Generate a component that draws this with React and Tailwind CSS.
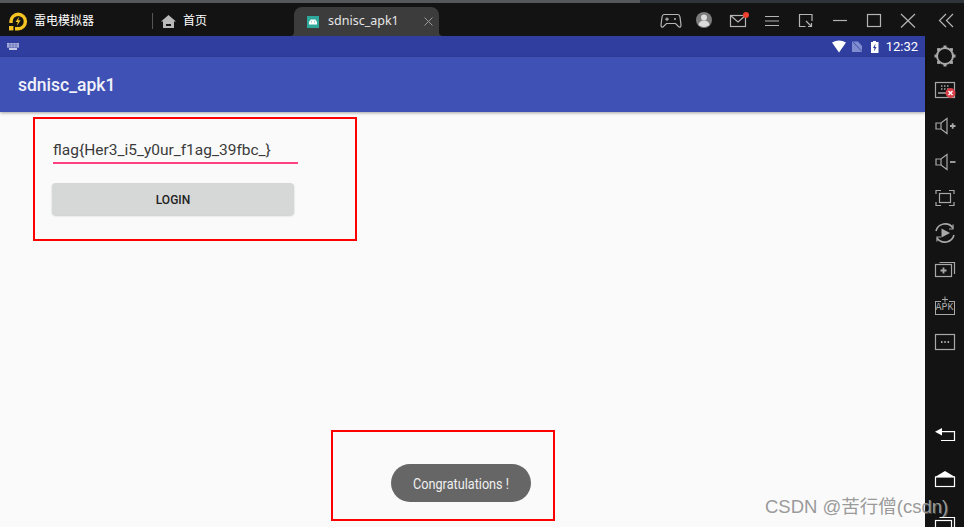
// App.jsx
import React from 'react';

const cjk = "font-['Noto_Sans','Noto_Sans_CJK_SC',sans-serif]";

const Logo = () => (
  <svg width="20" height="19" viewBox="0 0 20 19" fill="none">
    <path d="M3 11V9.5A7.2 7.2 0 1 1 10.2 16.7H7" stroke="#f5c423" strokeWidth="3.4" />
    <path d="M11.2 4.5L7.6 10H9.8L8.8 14L12.6 8.2H10.2Z" fill="#f5c423" />
    <rect x="1" y="14" width="4.4" height="4.4" fill="#f5c423" />
  </svg>
);

const AndroidBadge = () => (
  <svg width="12" height="12" viewBox="0 0 12 12">
    <rect width="12" height="12" fill="#2fa89c" />
    <path d="M2 8.6V7A4 3.6 0 0 1 10 7V8.6Z" fill="#fff" />
    <path d="M3.6 3L4.6 4.4M8.4 3L7.4 4.4" stroke="#fff" strokeWidth="0.6" />
    <rect x="4" y="5.4" width="0.9" height="0.9" fill="#2fa89c" />
    <rect x="7.1" y="5.4" width="0.9" height="0.9" fill="#2fa89c" />
  </svg>
);

const TitleIcons = () => (
  <svg width="304" height="20" viewBox="0 0 304 20" fill="none" stroke="#b4b4b4" strokeWidth="1.2">
    {/* gamepad */}
    <path d="M4 3.5H18Q19.5 3.5 20 6L21 14Q21 16.5 19 16L15.5 12.5H6.5L3 16Q1 16.5 1 14L2 6Q2.5 3.5 4 3.5Z" />
    <path d="M7 6.5V10M5.2 8.2H8.8" />
    <circle cx="15" cy="8" r="1" fill="#b4b4b4" stroke="none" />
    {/* avatar */}
    <circle cx="44" cy="9" r="8" fill="#7c7c7c" stroke="none" />
    <circle cx="44" cy="6.5" r="3" fill="#dcdcdc" stroke="none" />
    <path d="M38.5 14A5.5 4.5 0 0 1 49.5 14Q44 18 38.5 14Z" fill="#dcdcdc" stroke="none" />
    {/* mail */}
    <rect x="70.5" y="4.5" width="15" height="11" />
    <path d="M70.5 4.5L78 11L85.5 4.5" />
    <circle cx="86" cy="4" r="3" fill="#f0402f" stroke="none" />
    {/* menu */}
    <path d="M105 5.5H119M105 10H119M105 14.5H119" />
    {/* resize */}
    <path d="M145.5 15.5H139.5V3.5H152V10" />
    <path d="M146 10L151.5 15.5M151.5 12V15.5H148" />
    {/* window controls */}
    <path d="M173 9.5H187" />
    <rect x="207.5" y="3.5" width="13" height="12" />
    <path d="M241 3L255 16.5M255 3L241 16.5" />
    {/* collapse */}
    <path d="M286 3L279.5 9.5L286 16M293 3L286.5 9.5L293 16" />
  </svg>
);

const StatusIcons = () => (
  <svg width="48" height="13" viewBox="0 0 48 13">
    <path d="M0 2.5Q7 -1.5 14 2.5L7 12.5Z" fill="#fff" />
    <path d="M20 1.5H26L30 6V12H20Z" fill="#7f8cd0" />
    <path d="M21 2L30 11.5" stroke="#303f9f" strokeWidth="0.8" />
    <path d="M39 2H41V1H44V2H46.5V13H39Z" fill="#fff" />
    <path d="M43.5 3.5L41 8H42.5L42 11.5L44.6 7H43Z" fill="#303f9f" />
  </svg>
);

const Side = ({ children, w = 24, h = 24 }) => (
  <svg width={w} height={h} viewBox={`0 0 ${w} ${h}`} fill="none" stroke="#a8a8a8" strokeWidth="1.2">
    {children}
  </svg>
);

const GearIcon = () => (
  <Side>
    <circle cx="12" cy="12" r="8" strokeWidth="2" />
    {[[12, 3], [12, 21], [3, 12], [21, 12], [5.6, 5.6], [18.4, 5.6], [5.6, 18.4], [18.4, 18.4]].map(([x, y], i) => (
      <rect key={i} x={x - 1.5} y={y - 1.5} width="3" height="3" fill="#a8a8a8" stroke="none" />
    ))}
  </Side>
);

const KeyboardIcon = () => (
  <Side h={18}>
    <rect x="2.5" y="1.5" width="19" height="15" />
    <path d="M8 5H9.5M11 5H12.5M14 5H15.5M8 8H9.5M11 8H12.5M14 8H15.5M5 12H14" strokeWidth="1.4" />
    <circle cx="17.5" cy="12" r="5" fill="#d9404a" stroke="none" />
    <path d="M15.5 10L19.5 14M19.5 10L15.5 14" stroke="#fff" strokeWidth="1.4" />
  </Side>
);

const VolumeIcon = ({ plus }) => (
  <Side h={18}>
    <path d="M3 6H8L14 1.5V16.5L8 12H3Z" />
    <path d="M8 6V12" />
    <path d={plus ? 'M17 9H22.5M19.7 6.2V11.8' : 'M17 9H22.5'} strokeWidth="1.8" />
  </Side>
);

const FullscreenIcon = () => (
  <Side h={18}>
    <path d="M3 5V1.5H8M16 1.5H21V5M3 13V16.5H8M16 16.5H21V13" />
    <rect x="6.5" y="4.5" width="11" height="9" />
  </Side>
);

const RotateIcon = () => (
  <Side h={22}>
    <path d="M3 9A9.5 9.5 0 0 1 20 6M21 13A9.5 9.5 0 0 1 4 16" strokeWidth="1.6" />
    <path d="M20 2.5V7H16M4 19.5V15H8" strokeWidth="1.2" />
    <path d="M8.5 6.5L17 11L8.5 15.5Z" fill="#a8a8a8" stroke="none" />
  </Side>
);

const MultiIcon = () => (
  <Side h={18}>
    <rect x="2.5" y="4.5" width="16" height="12" />
    <path d="M6.5 2.5H21.5V14" />
    <path d="M10.5 7.5V13.5M7.5 10.5H13.5" strokeWidth="1.8" />
  </Side>
);

const ApkIcon = () => (
  <div className="relative flex h-[19px] w-6 items-end justify-center">
    <div className="flex h-[14px] w-5 items-center justify-center border border-[#a8a8a8] font-['Liberation_Mono',monospace] text-[10px] leading-none text-[#a8a8a8]">
      APK
    </div>
    <svg className="absolute left-[8px] top-0" width="8" height="8" viewBox="0 0 8 8">
      <rect y="3" width="8" height="3" fill="#131313" />
      <path d="M4 0.5V6.5M1 3.5H7" stroke="#a8a8a8" />
    </svg>
  </div>
);

const DotsIcon = () => (
  <Side h={18}>
    <rect x="2.5" y="1.5" width="19" height="15" />
    <path d="M8 9H9.5M11.3 9H12.8M14.6 9H16.1" strokeWidth="1.8" />
  </Side>
);

const BackIcon = () => (
  <Side h={16}>
    <path d="M9 1V8.5L2 4.7Z" fill="#fff" stroke="none" />
    <path d="M8 4.7H21.5V13.5H8" stroke="#fff" />
  </Side>
);

const HomeIcon = () => (
  <Side h={18}>
    <path d="M2 7L12 1L22 7Z" fill="#fff" stroke="none" />
    <rect x="2.5" y="7" width="19" height="9.5" stroke="#fff" />
  </Side>
);

const RecentIcon = () => (
  <Side h={18}>
    <rect x="2.5" y="5.5" width="16" height="12" stroke="#fff" />
    <path d="M6.5 2.5H21.5V14" stroke="#fff" />
  </Side>
);

export default function App() {
  return (
    <div className="relative flex h-[527px] w-[964px] flex-col overflow-hidden bg-[#131313]">
      {/* strip of desktop above the window */}
      <div className="flex h-[3px]">
        <div className="w-[640px] bg-[#55575a]" />
        <div className="flex-1 bg-[#2f343a]" />
      </div>

      {/* emulator title bar */}
      <div className={`flex h-[33px] items-center ${cjk}`}>
        <div className="ml-2 mt-[3px]"><Logo /></div>
        <span className="ml-[6px] mt-[3px] text-xs leading-none text-white">雷电模拟器</span>
        <div className="ml-[58px] mt-[3px] h-4 w-px bg-[#555]" />
        <svg className="ml-2 mt-[3px]" width="15" height="13" viewBox="0 0 15 13">
          <path d="M7.5 0L15 6.5H13V13H2V6.5H0Z" fill="#b9b9b9" />
          <rect x="5" y="9" width="5" height="2" fill="#131313" />
        </svg>
        <span className="ml-[7px] mt-[3px] text-xs leading-none text-white">首页</span>
        <div className="relative ml-[87px] mt-[3px] flex h-[29px] w-[145px] items-center self-end rounded-t-lg bg-[#3c3c3c] pl-[13px]">
          <svg className="absolute bottom-0 left-[-4px]" width="4" height="4" viewBox="0 0 4 4">
            <path d="M0 4Q4 4 4 0V4Z" fill="#3c3c3c" />
          </svg>
          <svg className="absolute bottom-0 right-[-4px]" width="4" height="4" viewBox="0 0 4 4">
            <path d="M4 4Q0 4 0 0V4Z" fill="#3c3c3c" />
          </svg>
          <AndroidBadge />
          <span className="ml-[9px] text-[12.5px] leading-none text-[#e6e6e6]">sdnisc_apk1</span>
          <svg className="ml-[25px]" width="9" height="9" viewBox="0 0 9 9">
            <path d="M0.5 0.5L8.5 8.5M8.5 0.5L0.5 8.5" stroke="#9a9a9a" />
          </svg>
        </div>
        <div className="ml-auto mt-[3px]"><TitleIcons /></div>
      </div>

      <div className="flex flex-1 overflow-hidden">
        {/* android screen */}
        <div className="flex w-[925px] flex-col bg-[#fafafa]">
          <div className="flex h-[21px] items-center bg-[#303f9f] px-[7px]">
            <svg width="12" height="7" viewBox="0 0 12 7">
              <rect width="12" height="4.5" fill="#c5cae9" />
              <path d="M0 1.2H12M0 3H12M3 0V4.5M6 0V4.5M9 0V4.5" stroke="#303f9f" strokeWidth="0.5" />
              <rect x="2" y="5" width="8" height="2" fill="#c5cae9" />
            </svg>
            <div className="ml-auto"><StatusIcons /></div>
            <span className="ml-[6px] font-['Roboto',sans-serif] text-[13px] leading-none text-white">12:32</span>
          </div>
          <div className="flex h-[55px] items-center bg-[#3f51b5] pl-[18px] pt-px shadow-[0_1px_3px_rgba(0,0,0,0.35)]">
            <span className="font-['Roboto',sans-serif] text-[17.5px] font-medium text-[#f1f2fa]">sdnisc_apk1</span>
          </div>

          <div className="flex flex-col pl-[52px] pt-[27px] font-['Roboto',sans-serif]">
            <div className="ml-px flex h-[25px] w-[245px] items-center border-b-2 border-[#ff4081] pt-px text-[15.5px] text-[#3a3a3a]">
              flag{'{'}Her3_i5_y0ur_f1ag_39fbc_{'}'}
            </div>
            <button className="mt-[19px] h-8 w-[242px] rounded-sm bg-[#d6d7d7] pt-px text-xs font-medium text-[#222] shadow-[0_1px_2px_rgba(0,0,0,0.2)]">
              LOGIN
            </button>
          </div>
        </div>

        {/* emulator side toolbar */}
        <div className="flex flex-1 flex-col items-center pt-2 [&>*]:shrink-0">
          <GearIcon />
          <div className="mt-[13px]"><KeyboardIcon /></div>
          <div className="mt-[18px]"><VolumeIcon plus /></div>
          <div className="mt-[18px]"><VolumeIcon /></div>
          <div className="mt-[18px]"><FullscreenIcon /></div>
          <div className="mt-[15px]"><RotateIcon /></div>
          <div className="mt-[16px]"><MultiIcon /></div>
          <div className="mt-[18px]"><ApkIcon /></div>
          <div className="mt-[18px]"><DotsIcon /></div>
          <div className="mt-[76px]"><BackIcon /></div>
          <div className="mt-[27px]"><HomeIcon /></div>
          <div className="mt-[27px]"><RecentIcon /></div>
        </div>
      </div>

      {/* toast */}
      <div className="absolute left-[391px] top-[464px] flex h-[38px] w-[140px] items-center justify-center rounded-full bg-[#666] pt-[2px] font-['Roboto',sans-serif] text-sm text-[#f0f0f0]">
        <span className="inline-block scale-x-[0.905] whitespace-nowrap">Congratulations !</span>
      </div>

      {/* red annotation boxes drawn over the screenshot */}
      <div className="absolute left-[33px] top-[117px] h-[124px] w-[324px] border-2 border-[#f00]" />
      <div className="absolute left-[331px] top-[430px] h-[91px] w-[224px] border-2 border-[#f00]" />

      {/* watermark */}
      <div className="absolute left-[765px] top-[494px] font-['Liberation_Sans','Noto_Sans_CJK_SC',sans-serif] text-[18.5px] leading-[26px] text-[#9a9a9a] [text-shadow:1px_1px_0_rgba(255,255,255,0.25)]">
        CSDN @苦行僧(csdn)
      </div>
    </div>
  );
}
